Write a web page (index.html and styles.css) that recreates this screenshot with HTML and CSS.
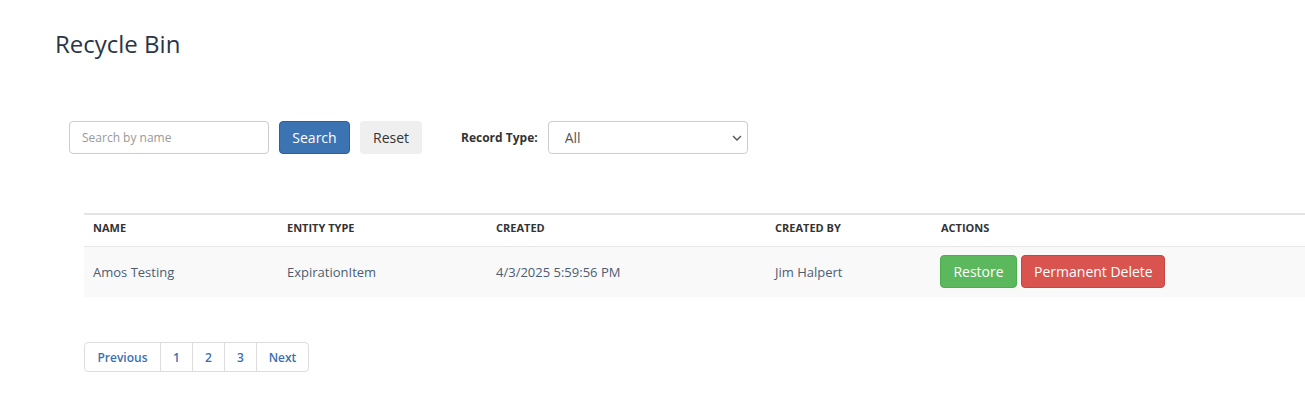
FILE: index.html
```html
<!DOCTYPE html>
<html>
  <head>
    <title>Recycle Bin</title>
    <link rel="stylesheet" href="styles.css">
  </head>
  <body>
    <h1 class="page-title">Recycle Bin</h1>

    <div class="toolbar">
      <input type="text" class="search-input" placeholder="Search by name" />
      <button class="btn btn-primary">Search</button>
      <button class="btn btn-light">Reset</button>
      <label class="filter-label">Record Type:</label>
      <div class="select-wrap">
        <select class="record-select">
          <option>All</option>
        </select>
        <svg class="select-arrow" width="10" height="6" viewBox="0 0 10 6">
          <path d="M1 1 L5 5 L9 1" fill="none" stroke="#555" stroke-width="1.4" />
        </svg>
      </div>
    </div>

    <div class="table-area">
      <table class="bin-table">
        <thead>
          <tr>
            <th class="col-name">Name</th>
            <th class="col-type">Entity Type</th>
            <th class="col-created">Created</th>
            <th class="col-by">Created By</th>
            <th>Actions</th>
          </tr>
        </thead>
        <tbody>
          <tr>
            <td>Amos Testing</td>
            <td>ExpirationItem</td>
            <td>4/3/2025 5:59:56 PM</td>
            <td>Jim Halpert</td>
            <td class="actions">
              <button class="btn btn-success">Restore</button>
              <button class="btn btn-danger">Permanent Delete</button>
            </td>
          </tr>
        </tbody>
      </table>

      <ul class="pagination">
        <li><a href="#">Previous</a></li>
        <li><a href="#">1</a></li>
        <li><a href="#">2</a></li>
        <li><a href="#">3</a></li>
        <li><a href="#">Next</a></li>
      </ul>
    </div>
  </body>
</html>
```

FILE: styles.css
```css
body {
  margin: 0;
  font-family: "Open Sans", "Liberation Sans", sans-serif;
  background-color: #fff;
  color: #333;
  overflow: hidden;
}

.page-title {
  font-size: 24px;
  font-weight: 400;
  color: #2a3547;
  margin: 27px 0 0 55px;
  line-height: 33px;
}

.toolbar {
  display: flex;
  align-items: center;
  margin: 61px 0 0 69px;
  height: 33px;
}

.search-input {
  width: 200px;
  height: 33px;
  box-sizing: border-box;
  border: 1px solid #ccc;
  border-radius: 4px;
  padding: 0 12px;
  font-family: inherit;
  font-size: 12px;
  color: #555;
}

.search-input::placeholder {
  color: #999;
}

.btn {
  font-family: inherit;
  font-size: 14px;
  height: 33px;
  border: 1px solid transparent;
  border-radius: 4px;
  padding: 0 12px;
  cursor: pointer;
  line-height: 1;
}

.toolbar .btn-primary {
  margin-left: 10px;
  width: 71px;
}

.btn-primary {
  background-color: #3c73b3;
  border-color: #2e5f97;
  color: #fff;
}

.btn-light {
  background-color: #efefef;
  color: #333;
  margin-left: 10px;
  width: 62px;
}

.filter-label {
  font-size: 12px;
  font-weight: 700;
  color: #333;
  margin-left: 39px;
  margin-right: 10px;
}

.select-wrap {
  position: relative;
}

.record-select {
  width: 200px;
  height: 33px;
  border: 1px solid #ccc;
  border-radius: 4px;
  background: #fff;
  appearance: none;
  padding: 0 16px;
  font-family: inherit;
  font-size: 14px;
  color: #555;
}

.select-arrow {
  position: absolute;
  right: 6px;
  top: 14px;
  pointer-events: none;
}

.table-area {
  margin: 59px 0 0 84px;
}

.bin-table {
  width: 1222px;
  border-collapse: collapse;
  border-top: 2px solid #e4e4e4;
  border-right: 1px solid #eee;
}

.bin-table th {
  text-align: left;
  font-size: 11px;
  font-weight: 700;
  text-transform: uppercase;
  color: #333;
  height: 25px;
  padding: 0 9px 6px;
  border-bottom: 1px solid #e8e8e8;
}

.bin-table td {
  font-size: 13px;
  color: #4c5d73;
  height: 49px;
  padding: 0 9px 1px;
  background-color: #f9f9f9;
}

.col-name { width: 176px; }
.col-type { width: 191px; }
.col-created { width: 261px; }
.col-by { width: 148px; }

.bin-table td.actions {
  padding-left: 8px;
}

.btn-success {
  background-color: #5cb85c;
  border-color: #4cae4c;
  color: #fff;
  width: 77px;
  padding: 0;
}

.btn-danger {
  background-color: #d9534f;
  border-color: #c9433f;
  color: #fff;
  width: 144px;
  padding: 0;
  margin-left: 1px;
}

.pagination {
  list-style: none;
  display: flex;
  margin: 45px 0 0;
  padding: 0;
}

.pagination li a {
  display: block;
  height: 30px;
  line-height: 30px;
  box-sizing: border-box;
  padding: 0;
  text-align: center;
  font-size: 12px;
  font-weight: 600;
  color: #3a6fb0;
  text-decoration: none;
  border: 1px solid #ddd;
  margin-left: -1px;
  width: 33px;
}

.pagination li:first-child a {
  margin-left: 0;
  border-radius: 4px 0 0 4px;
  width: 77px;
}

.pagination li:last-child a {
  border-radius: 0 4px 4px 0;
  width: 53px;
}
```
